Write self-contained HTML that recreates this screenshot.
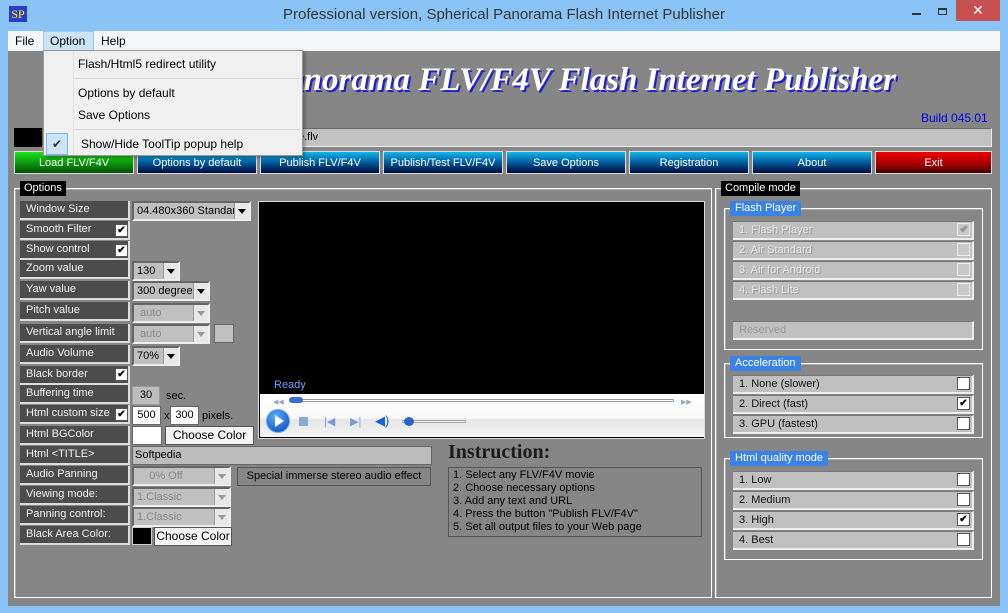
<!DOCTYPE html>
<html><head><meta charset="utf-8"><style>
*{margin:0;padding:0;box-sizing:border-box}
body{width:1008px;height:613px;overflow:hidden;background:#8ac4f6;font-family:"Liberation Sans",sans-serif;font-size:11px;position:relative}
.a{position:absolute}
.lbl{position:absolute;left:20px;width:110px;height:19px;background:#4c4c4c;color:#f2f2f2;border-right:2px solid #ddd;border-bottom:2px solid #ddd;padding-left:6px;line-height:16px;font-size:11px;white-space:nowrap;overflow:hidden}
.cb{position:absolute;width:13px;height:13px;background:#fff;border:1px solid #555;font-size:10px;line-height:11px;text-align:center;color:#000;font-weight:bold}
.sel{position:absolute;height:20px;background:#c0c0c0;border:2px solid #eee;border-top-color:#666;border-left-color:#666;font-size:11px;line-height:16px;padding-left:3px;color:#000;overflow:hidden;white-space:nowrap}
.sel.d{color:#888}
.sel i{position:absolute;right:0;top:0;width:15px;height:16px;background:#e8e8e8;border-left:1px solid #999}
.sel i:after{content:"";position:absolute;left:3px;top:6px;border:4px solid transparent;border-top:5px solid #000;border-bottom:0}
.sel.d i:after{border-top-color:#999}
.btn{position:absolute;top:151px;height:23px;width:120px;color:#fff;text-align:center;line-height:23px;font-size:11px;background:linear-gradient(#12b6ee,#004a8a 60%,#000a3a);border:1px solid #ddd}
.grp{position:absolute;border:1px solid #fff;box-shadow:inset 1px 1px 0 #aaa}
.glbl{position:absolute;background:#000;color:#fff;padding:0 4px;height:15px;line-height:15px;font-size:11px}
.blbl{position:absolute;background:#3a82e4;color:#fff;padding:0 5px;height:15px;line-height:15px;font-size:11px}
.it{position:absolute;left:733px;width:241px;height:19px;background:#c0c0c0;border-bottom:2px solid #eee;border-right:2px solid #eee;border-top:1px solid #777;padding-left:6px;line-height:16px;color:#111;font-size:11px}
.it.d{color:#e8e8e8;text-shadow:1px 1px 0 #999}
.it .cb{right:2px;top:1px;left:auto}
.it.d .cb{background:#c8c8c8;border-color:#eee;color:#999}
.mi{position:absolute;left:78px;font-size:12px;color:#000}
</style></head><body>
<div class="a" style="left:9px;top:6px;width:18px;height:16px;background:#2c3cc8;color:#ff0;font-family:'Liberation Serif',serif;font-size:12px;line-height:16px;text-align:center">SP</div>
<div class="a" style="left:0;width:1008px;top:6px;text-align:center;font-size:15px;color:#333">Professional version, Spherical Panorama Flash Internet Publisher</div>
<div class="a" style="left:912px;top:13px;width:9px;height:2px;background:#333"></div>
<div class="a" style="left:938px;top:8px;width:9px;height:7px;border:1px solid #333;border-top-width:2px"></div>
<div class="a" style="left:956px;top:0;width:44px;height:21px;background:#c75050;color:#fff;text-align:center;font-size:14px;line-height:21px">✕</div>
<div class="a" style="left:8px;top:31px;width:992px;height:20px;background:#f5f6f7"></div>
<div class="a" style="left:43px;top:31px;width:51px;height:20px;background:#cce4f7;border:1px solid #99c9ef"></div>
<div class="a" style="left:15px;top:34px;font-size:12px">File</div>
<div class="a" style="left:50px;top:34px;font-size:12px">Option</div>
<div class="a" style="left:101px;top:34px;font-size:12px">Help</div>
<div class="a" style="left:8px;top:51px;width:992px;height:555px;background:#868686"></div>
<div class="a" style="left:60px;top:62px;font-family:'Liberation Serif',serif;font-style:italic;font-weight:bold;font-size:33px;color:#fff;text-shadow:2px 2px 0 #2020d0;white-space:nowrap;width:836px;text-align:right">Spherical Panorama FLV/F4V Flash Internet Publisher</div>
<div class="a" style="left:921px;top:111px;color:#0000ee;font-size:12px">Build 045.01</div>
<div class="a" style="left:14px;top:128px;width:28px;height:19px;background:#000"></div>
<div class="a" style="left:42px;top:128px;width:950px;height:19px;background:#c2c2c2;border:1px solid #eee;border-top-color:#666;border-left-color:#666;padding-left:255px;line-height:16px">e.flv</div>
<div class="btn" style="left:14px;background:linear-gradient(#1ce41c,#0a8a0a 60%,#045004)">Load FLV/F4V</div>
<div class="btn" style="left:137px">Options by default</div>
<div class="btn" style="left:260px">Publish FLV/F4V</div>
<div class="btn" style="left:383px">Publish/Test FLV/F4V</div>
<div class="btn" style="left:506px">Save Options</div>
<div class="btn" style="left:629px">Registration</div>
<div class="btn" style="left:752px">About</div>
<div class="btn" style="left:875px;width:117px;background:linear-gradient(#f00000,#a00000 60%,#400000)">Exit</div>
<div class="grp" style="left:14px;top:188px;width:698px;height:410px"></div>
<div class="glbl" style="left:20px;top:181px">Options</div>
<div class="grp" style="left:715px;top:188px;width:277px;height:410px"></div>
<div class="glbl" style="left:721px;top:181px">Compile mode</div>
<div class="lbl" style="top:201px">Window Size</div>
<div class="sel" style="left:132px;top:201px;width:119px">04.480x360 Standard<i></i></div>
<div class="lbl" style="top:221px">Smooth Filter</div><div class="cb" style="left:115px;top:224px">✔</div>
<div class="lbl" style="top:241px">Show control</div><div class="cb" style="left:115px;top:244px">✔</div>
<div class="lbl" style="top:260px">Zoom value</div>
<div class="sel" style="left:132px;top:261px;width:48px">130<i></i></div>
<div class="lbl" style="top:281px">Yaw value</div>
<div class="sel" style="left:132px;top:281px;width:78px">300 degree<i></i></div>
<div class="lbl" style="top:302px">Pitch value</div>
<div class="sel d" style="left:132px;top:303px;width:78px">&nbsp;auto<i></i></div>
<div class="lbl" style="top:324px">Vertical angle limit</div>
<div class="sel d" style="left:132px;top:324px;width:78px">&nbsp;auto<i></i></div>
<div class="a" style="left:214px;top:324px;width:20px;height:19px;background:#c0c0c0;border:1px solid #666"></div>
<div class="lbl" style="top:345px">Audio Volume</div>
<div class="sel" style="left:132px;top:346px;width:48px">70%<i></i></div>
<div class="lbl" style="top:366px">Black border</div><div class="cb" style="left:115px;top:368px">✔</div>
<div class="lbl" style="top:385px">Buffering time</div>
<div class="a" style="left:132px;top:386px;width:28px;height:19px;background:#bdbdbd;border:1px solid #999;text-align:center;line-height:17px">30</div>
<div class="a" style="left:166px;top:390px">sec.</div>
<div class="lbl" style="top:405px">Html custom size</div><div class="cb" style="left:115px;top:408px">✔</div>
<div class="a" style="left:132px;top:406px;width:29px;height:19px;background:#fff;border:1px solid #666;text-align:center;line-height:17px">500</div>
<div class="a" style="left:164px;top:410px">x</div>
<div class="a" style="left:170px;top:406px;width:29px;height:19px;background:#fff;border:1px solid #666;text-align:center;line-height:17px">300</div>
<div class="a" style="left:202px;top:410px">pixels.</div>
<div class="lbl" style="top:426px">Html BGColor</div>
<div class="a" style="left:132px;top:426px;width:30px;height:19px;background:#fff;border:1px solid #666"></div>
<div class="a" style="left:165px;top:426px;width:89px;height:19px;background:#f4f4f4;border:1px solid #555;text-align:center;line-height:17px;font-size:12px">Choose Color</div>
<div class="lbl" style="top:446px">Html &lt;TITLE&gt;</div>
<div class="a" style="left:132px;top:446px;width:300px;height:19px;background:#bdbdbd;border:1px solid #666;padding-left:2px;line-height:17px">Softpedia</div>
<div class="lbl" style="top:466px">Audio Panning</div>
<div class="sel d" style="left:132px;top:466px;width:99px">&nbsp;&nbsp;&nbsp;&nbsp;0% Off<i></i></div>
<div class="a" style="left:237px;top:467px;width:194px;height:19px;border:1px solid #555;text-align:center;line-height:16px">Special immerse stereo audio effect</div>
<div class="lbl" style="top:486px">Viewing mode:</div>
<div class="sel d" style="left:132px;top:487px;width:99px">1.Classic<i></i></div>
<div class="lbl" style="top:506px">Panning control:</div>
<div class="sel d" style="left:132px;top:507px;width:99px">1.Classic<i></i></div>
<div class="lbl" style="top:526px">Black Area Color:</div>
<div class="a" style="left:132px;top:527px;width:20px;height:18px;background:#000;border:1px solid #ccc"></div>
<div class="a" style="left:154px;top:527px;width:78px;height:19px;background:#f4f4f4;border:1px solid #555;text-align:center;line-height:17px;font-size:12px">Choose Color</div>
<div class="a" style="left:258px;top:201px;width:447px;height:238px;background:#000;border:1px solid #ddd"></div>
<div class="a" style="left:274px;top:379px;color:#6ca0ff;font-size:11px">Ready</div>
<div class="a" style="left:260px;top:394px;width:444px;height:43px;background:linear-gradient(#fff,#fafafa 55%,#e6e6e6 60%,#f4f4f4)"></div>
<div class="a" style="left:289px;top:399px;width:385px;height:3px;border:1px solid #999;border-radius:2px"></div>
<div class="a" style="left:289px;top:397px;width:14px;height:6px;background:#3a6ed0;border-radius:3px"></div>
<div class="a" style="left:273px;top:398px;color:#9ab;font-size:7px">◀◀</div>
<div class="a" style="left:681px;top:398px;color:#9ab;font-size:7px">▶▶</div>
<div class="a" style="left:266px;top:409px;width:24px;height:24px;border-radius:50%;background:radial-gradient(circle at 40% 30%,#5ab0ff,#0640b0);border:1px solid #6af"></div>
<div class="a" style="left:275px;top:415px;border-left:9px solid #fff;border-top:6px solid transparent;border-bottom:6px solid transparent"></div>
<div class="a" style="left:299px;top:417px;width:9px;height:9px;background:#8aa8d8"></div>
<div class="a" style="left:324px;top:415px;color:#7b9ad4;font-size:11px">|◀</div>
<div class="a" style="left:350px;top:415px;color:#7b9ad4;font-size:11px">▶|</div>
<div class="a" style="left:375px;top:413px;color:#1b5ed0;font-size:13px">◀)</div>
<div class="a" style="left:402px;top:420px;width:64px;height:3px;border:1px solid #aaa"></div>
<div class="a" style="left:404px;top:417px;width:10px;height:9px;border-radius:50%;background:#2a64c8"></div>
<div class="a" style="left:448px;top:441px;font-family:'Liberation Serif',serif;font-weight:bold;font-size:20px;color:#1a1a1a">Instruction:</div>
<div class="a" style="left:448px;top:467px;width:254px;height:70px;border:1px solid #555;padding:1px 0 0 4px;font-size:11px;line-height:13px;color:#000">1. Select any FLV/F4V movie<br>2. Choose necessary options<br>3. Add any text and URL<br>4. Press the button "Publish FLV/F4V"<br>5. Set all output files to your Web page</div>
<div class="grp" style="left:724px;top:208px;width:259px;height:142px"></div>
<div class="blbl" style="left:730px;top:201px">Flash Player</div>
<div class="it d" style="top:221px">1. Flash Player<div class="cb">✔</div></div>
<div class="it d" style="top:241px">2. Air Standard<div class="cb"></div></div>
<div class="it d" style="top:261px">3. Air for Android<div class="cb"></div></div>
<div class="it d" style="top:281px">4. Flash Lite<div class="cb"></div></div>
<div class="it" style="top:321px;color:#999">Reserved</div>
<div class="grp" style="left:724px;top:363px;width:259px;height:75px"></div>
<div class="blbl" style="left:730px;top:356px">Acceleration</div>
<div class="it" style="top:375px">1. None (slower)<div class="cb"></div></div>
<div class="it" style="top:395px">2. Direct (fast)<div class="cb">✔</div></div>
<div class="it" style="top:415px">3. GPU (fastest)<div class="cb"></div></div>
<div class="grp" style="left:724px;top:458px;width:259px;height:102px"></div>
<div class="blbl" style="left:730px;top:451px">Html quality mode</div>
<div class="it" style="top:471px">1. Low<div class="cb"></div></div>
<div class="it" style="top:491px">2. Medium<div class="cb"></div></div>
<div class="it" style="top:511px">3. High<div class="cb">✔</div></div>
<div class="it" style="top:531px">4. Best<div class="cb"></div></div>
<div class="a" style="left:43px;top:50px;width:260px;height:106px;background:#f0f0f0;border:1px solid #999;box-shadow:2px 2px 3px rgba(0,0,0,.3)"></div>
<div class="a" style="left:73px;top:51px;width:1px;height:104px;background:#e0e0e0"></div>
<div class="a" style="left:74px;top:78px;width:226px;height:1px;background:#d8d8d8"></div>
<div class="a" style="left:74px;top:129px;width:226px;height:1px;background:#d8d8d8"></div>
<div class="mi" style="top:57px">Flash/Html5 redirect utility</div>
<div class="mi" style="top:86px">Options by default</div>
<div class="mi" style="top:108px">Save Options</div>
<div class="a" style="left:46px;top:133px;width:22px;height:22px;background:#cce4f7;border:1px solid #7ab5e8;text-align:center;line-height:20px;font-size:12px;color:#333">✔</div>
<div class="mi" style="left:81px;top:137px">Show/Hide ToolTip popup help</div>
</body></html>
